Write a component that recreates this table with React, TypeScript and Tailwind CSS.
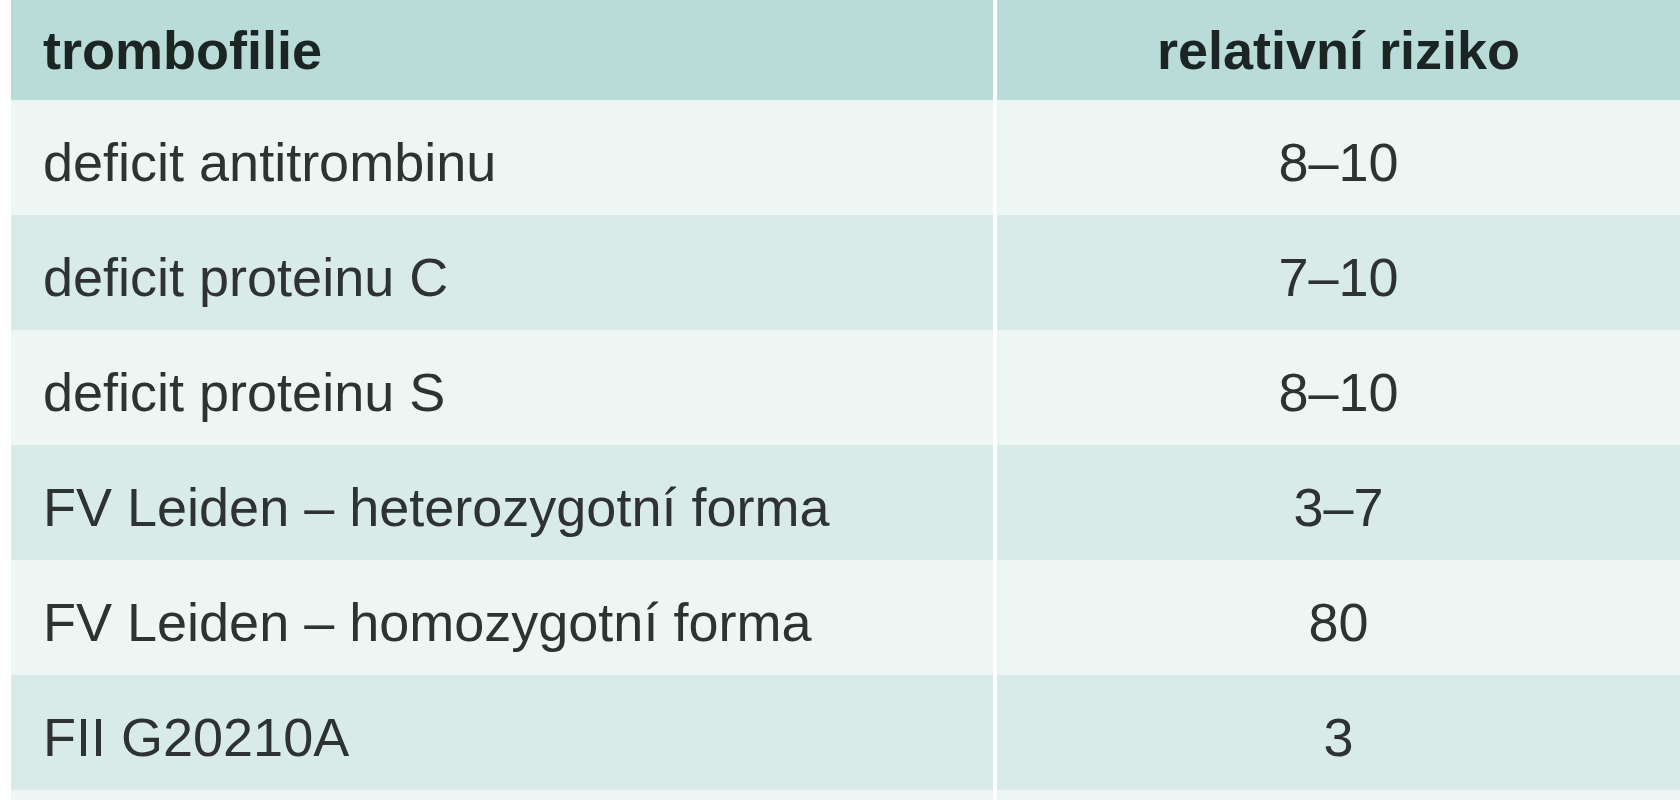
const rows: [string, string][] = [
  ['deficit antitrombinu', '8–10'],
  ['deficit proteinu C', '7–10'],
  ['deficit proteinu S', '8–10'],
  ['FV Leiden – heterozygotní forma', '3–7'],
  ['FV Leiden – homozygotní forma', '80'],
  ['FII G20210A', '3'],
];

export default function App() {
  return (
    <div
      className="w-[1680px] h-[800px] bg-white pl-[11px] overflow-hidden"
      style={{ fontFamily: '"Liberation Sans", Arial, sans-serif' }}
    >
      <div className="grid grid-cols-[982px_683px] gap-x-[4px] bg-white">
        {/* Header */}
        <div className="h-[100px] bg-[#b9dcd8] flex items-center pl-[32px] text-[54px] font-bold text-[#1b2624] leading-none">
          trombofilie
        </div>
        <div className="h-[100px] bg-[#b9dcd8] flex items-center justify-center text-[54px] font-bold text-[#1b2624] leading-none">
          relativní riziko
        </div>

        {rows.map(([name, risk], i) => {
          const bg = i % 2 === 0 ? 'bg-[#eef6f4]' : 'bg-[#d9ebe8]';
          return [
            <div
              key={`n${i}`}
              className={`h-[115px] ${bg} flex items-center pl-[32px] pt-[10px] text-[54px] text-[#2e3231]`}
            >
              {name}
            </div>,
            <div
              key={`r${i}`}
              className={`h-[115px] ${bg} flex items-center justify-center pt-[10px] text-[54px] text-[#2e3231]`}
            >
              {risk}
            </div>,
          ];
        })}

        <div className="h-[12px] bg-[#eef6f4]" />
        <div className="h-[12px] bg-[#eef6f4]" />
      </div>
    </div>
  );
}
